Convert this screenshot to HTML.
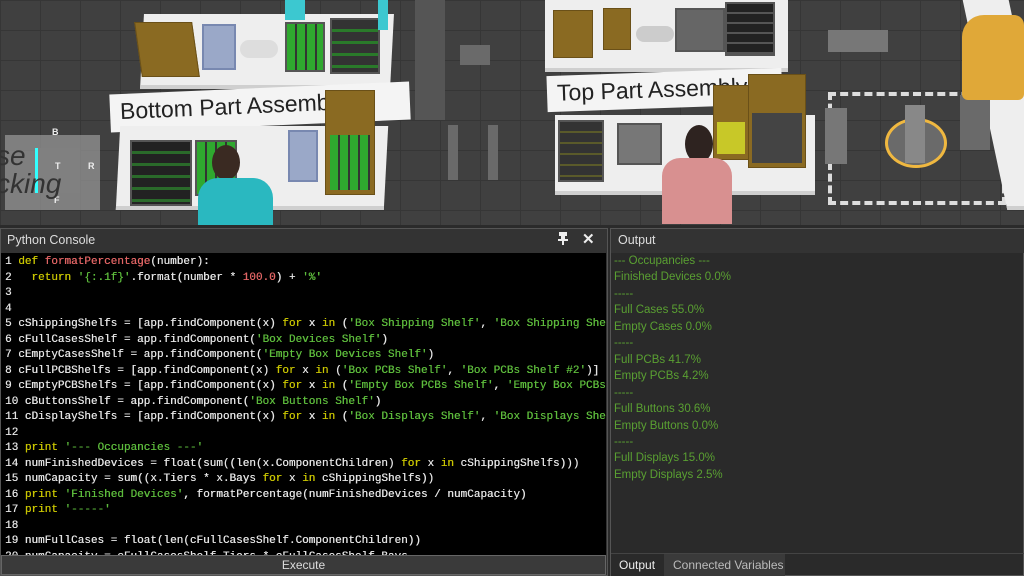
<!DOCTYPE html>
<html><head><meta charset="utf-8"><style>
*{margin:0;padding:0;box-sizing:border-box}
body{width:1024px;height:576px;overflow:hidden;background:#2b2b2b;font-family:"Liberation Sans",sans-serif;position:relative}
.a{position:absolute}
#scene{left:0;top:0;width:1024px;height:225px;background:#404040;overflow:hidden;
background-image:linear-gradient(#363636 1px,transparent 1px),linear-gradient(90deg,#363636 1px,transparent 1px);background-size:40px 30px}
.tbl{background:#eeeeee;border-bottom:4px solid #cfcfcf}
.box{background:#8a6a22;border:1px solid #6a5018}
.tray{background:#333;border:2px solid #555}
.pcb{background:repeating-linear-gradient(90deg,#2fa82f 0 8px,#333 8px 10px),#333}
.lbl{background:#f4f4f4;color:#222;font-size:23px;white-space:nowrap;overflow:hidden;padding-left:10px;line-height:34px}
#code{font-family:"Liberation Mono",monospace;font-size:11px;color:#e4e4e4;line-height:15.5px;white-space:pre;text-shadow:0.3px 0 0 currentColor}
.k{color:#c8c400}.f{color:#e06464}.s{color:#5dbb3c}.n{color:#e06464}
#out{font-size:11.5px;color:#5aa032;line-height:16.45px;white-space:pre}
</style></head><body>
<div id="scene" class="a">
  <div class="a" style="left:415px;top:0;width:30px;height:120px;background:#555"></div>
  <div class="a" style="left:460px;top:45px;width:30px;height:20px;background:#6a6a6a"></div>
  <div class="a" style="left:448px;top:125px;width:10px;height:55px;background:#6a6a6a"></div>
  <div class="a" style="left:488px;top:125px;width:10px;height:55px;background:#6a6a6a"></div>
  <div class="a tbl" style="left:142px;top:14px;width:250px;height:75px;transform:skewX(-3deg)"></div>
  <div class="a box" style="left:138px;top:22px;width:58px;height:55px;transform:skewX(8deg)"></div>
  <div class="a" style="left:202px;top:24px;width:34px;height:46px;background:#9aa8c8;border:2px solid #7888b0"></div>
  <div class="a" style="left:240px;top:40px;width:38px;height:18px;border-radius:9px;background:#ddd"></div>
  <div class="a tray pcb" style="left:285px;top:22px;width:40px;height:50px"></div>
  <div class="a tray" style="left:330px;top:18px;width:50px;height:56px;background:repeating-linear-gradient(#333 0 9px,#2a7a2a 9px 12px)"></div>
  <div class="a" style="left:285px;top:0;width:20px;height:20px;background:#3cc8d0"></div>
  <div class="a" style="left:378px;top:0;width:10px;height:30px;background:#3cc8d0"></div>
  <div class="a lbl" style="left:110px;top:88px;width:300px;height:38px;transform:rotate(-2.5deg);font-size:23px">Bottom Part Assembly</div>
  <div class="a tbl" style="left:118px;top:126px;width:268px;height:84px;transform:skewX(-3deg)"></div>
  <div class="a tray" style="left:130px;top:140px;width:62px;height:66px;background:repeating-linear-gradient(#222 0 9px,#2a6a2a 9px 12px)"></div>
  <div class="a tray pcb" style="left:195px;top:140px;width:42px;height:56px"></div>
  <div class="a" style="left:288px;top:130px;width:30px;height:52px;background:#9aa8c8;border:2px solid #7888b0"></div>
  <div class="a box" style="left:325px;top:90px;width:50px;height:105px"></div>
  <div class="a pcb" style="left:330px;top:135px;width:40px;height:55px"></div>
  <div class="a" style="left:212px;top:145px;width:28px;height:35px;border-radius:50%;background:#3a2a22"></div>
  <div class="a" style="left:198px;top:178px;width:75px;height:47px;border-radius:20px 20px 0 0;background:#2ab8c0"></div>
  <div class="a" style="left:5px;top:135px;width:95px;height:75px;background:#9a9a9a;opacity:.7"></div>
  <div class="a" style="left:35px;top:148px;width:45px;height:45px;background:#808080;border-left:3px solid #3ff"></div>
  <div class="a" style="left:52px;top:127px;color:#eee;font-size:9px;font-weight:bold">B</div>
  <div class="a" style="left:55px;top:161px;color:#eee;font-size:9px;font-weight:bold">T</div>
  <div class="a" style="left:88px;top:161px;color:#eee;font-size:9px;font-weight:bold">R</div>
  <div class="a" style="left:54px;top:195px;color:#eee;font-size:9px;font-weight:bold">F</div>
  <div class="a" style="left:-4px;top:142px;color:#333;font-size:28px;font-style:italic;line-height:28px">se<br>cking</div>
  <div class="a tbl" style="left:545px;top:0;width:243px;height:72px"></div>
  <div class="a box" style="left:553px;top:10px;width:40px;height:48px"></div>
  <div class="a box" style="left:603px;top:8px;width:28px;height:42px"></div>
  <div class="a" style="left:636px;top:26px;width:38px;height:16px;border-radius:8px;background:#ccc"></div>
  <div class="a tray" style="left:675px;top:8px;width:50px;height:44px;background:#666"></div>
  <div class="a tray" style="left:725px;top:2px;width:50px;height:54px;background:repeating-linear-gradient(#222 0 8px,#555 8px 10px)"></div>
  <div class="a lbl" style="left:547px;top:72px;width:235px;height:36px;transform:rotate(-2deg)">Top Part Assembly</div>
  <div class="a tbl" style="left:555px;top:115px;width:260px;height:80px"></div>
  <div class="a tray" style="left:558px;top:120px;width:46px;height:62px;background:repeating-linear-gradient(#333 0 9px,#5a5a2a 9px 11px)"></div>
  <div class="a tray" style="left:617px;top:123px;width:45px;height:42px;background:#777"></div>
  <div class="a box" style="left:713px;top:85px;width:36px;height:75px"></div>
  <div class="a" style="left:717px;top:122px;width:28px;height:32px;background:#c8c828"></div>
  <div class="a box" style="left:748px;top:74px;width:58px;height:94px"></div>
  <div class="a" style="left:752px;top:113px;width:50px;height:50px;background:#444"></div>
  <div class="a" style="left:685px;top:125px;width:28px;height:38px;border-radius:50%;background:#2e2320"></div>
  <div class="a" style="left:662px;top:158px;width:70px;height:66px;border-radius:18px 18px 0 0;background:#d89090"></div>
  <div class="a" style="left:828px;top:92px;width:178px;height:113px;border:4px dashed #ddd"></div>
  <div class="a" style="left:828px;top:30px;width:60px;height:22px;background:#777"></div>
  <div class="a" style="left:825px;top:108px;width:22px;height:56px;background:#777"></div>
  <div class="a" style="left:885px;top:118px;width:62px;height:50px;border-radius:50%;border:3px solid #f0b840;background:#6a6a6a"></div>
  <div class="a" style="left:905px;top:105px;width:20px;height:58px;background:#888"></div>
  <div class="a tbl" style="left:985px;top:0;width:46px;height:210px;transform:skewX(12deg)"></div>
  <div class="a" style="left:960px;top:95px;width:30px;height:55px;background:#6a6a6a"></div>
  <div class="a" style="left:962px;top:15px;width:62px;height:85px;border-radius:22px 10px 6px 6px;background:#e0a838"></div>
</div>
<div class="a" style="left:0;top:228px;width:608px;height:348px;background:#333;border:1px solid #555"></div>
<div class="a" style="left:7px;top:233px;font-size:12.5px;color:#ddd">Python Console</div>
<div class="a" style="left:559px;top:232px;width:8px;height:4px;background:#eee"></div>
<div class="a" style="left:561px;top:236px;width:4px;height:4px;background:#eee"></div>
<div class="a" style="left:558px;top:239px;width:10px;height:2px;background:#eee"></div>
<div class="a" style="left:562px;top:241px;width:2px;height:4px;background:#eee"></div>
<div class="a" style="left:582px;top:230px;font-size:15px;color:#eee;font-weight:bold">✕</div>
<div class="a" style="left:1px;top:253px;width:605px;height:302px;background:#000;overflow:hidden">
<div id="code" class="a" style="left:4px;top:2px">1 <span class="k">def</span> <span class="f">formatPercentage</span>(number):
2   <span class="k">return</span> <span class="s">'{:.1f}'</span>.format(number * <span class="n">100.0</span>) + <span class="s">'%'</span>
3
4
5 cShippingShelfs = [app.findComponent(x) <span class="k">for</span> x <span class="k">in</span> (<span class="s">'Box Shipping Shelf'</span>, <span class="s">'Box Shipping Shelf #2'</span>
6 cFullCasesShelf = app.findComponent(<span class="s">'Box Devices Shelf'</span>)
7 cEmptyCasesShelf = app.findComponent(<span class="s">'Empty Box Devices Shelf'</span>)
8 cFullPCBShelfs = [app.findComponent(x) <span class="k">for</span> x <span class="k">in</span> (<span class="s">'Box PCBs Shelf'</span>, <span class="s">'Box PCBs Shelf #2'</span>)]
9 cEmptyPCBShelfs = [app.findComponent(x) <span class="k">for</span> x <span class="k">in</span> (<span class="s">'Empty Box PCBs Shelf'</span>, <span class="s">'Empty Box PCBs'</span>
10 cButtonsShelf = app.findComponent(<span class="s">'Box Buttons Shelf'</span>)
11 cDisplayShelfs = [app.findComponent(x) <span class="k">for</span> x <span class="k">in</span> (<span class="s">'Box Displays Shelf'</span>, <span class="s">'Box Displays Shelf'</span>
12
13 <span class="k">print</span> <span class="s">'--- Occupancies ---'</span>
14 numFinishedDevices = float(sum((len(x.ComponentChildren) <span class="k">for</span> x <span class="k">in</span> cShippingShelfs)))
15 numCapacity = sum((x.Tiers * x.Bays <span class="k">for</span> x <span class="k">in</span> cShippingShelfs))
16 <span class="k">print</span> <span class="s">'Finished Devices'</span>, formatPercentage(numFinishedDevices / numCapacity)
17 <span class="k">print</span> <span class="s">'-----'</span>
18
19 numFullCases = float(len(cFullCasesShelf.ComponentChildren))
20 numCapacity = cFullCasesShelf.Tiers * cFullCasesShelf.Bays</div>
</div>
<div class="a" style="left:1px;top:555px;width:605px;height:20px;background:#3a3a3a;border:1px solid #666;color:#ddd;font-size:12px;text-align:center;line-height:18px">Execute</div>
<div class="a" style="left:610px;top:228px;width:414px;height:348px;background:#2a2a2a;border:1px solid #555"></div>
<div class="a" style="left:611px;top:229px;width:413px;height:24px;background:#333"></div>
<div class="a" style="left:618px;top:233px;font-size:12.5px;color:#ddd">Output</div>
<div id="out" class="a" style="left:614px;top:253px">--- Occupancies ---
Finished Devices 0.0%
-----
Full Cases 55.0%
Empty Cases 0.0%
-----
Full PCBs 41.7%
Empty PCBs 4.2%
-----
Full Buttons 30.6%
Empty Buttons 0.0%
-----
Full Displays 15.0%
Empty Displays 2.5%</div>
<div class="a" style="left:611px;top:553px;width:413px;height:1px;background:#444"></div>
<div class="a" style="left:611px;top:554px;width:53px;height:22px;background:#2a2a2a;color:#eee;font-size:12px;line-height:22px;padding-left:8px">Output</div>
<div class="a" style="left:664px;top:554px;width:121px;height:22px;background:#3a3a3a;color:#bbb;font-size:12px;line-height:22px;padding-left:9px">Connected Variables</div>
</body></html>
